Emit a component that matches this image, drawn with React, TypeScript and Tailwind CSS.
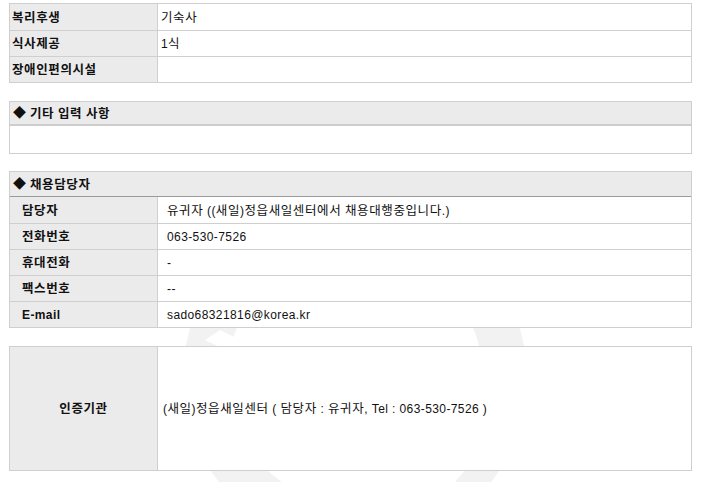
import React from 'react';

const font = { fontFamily: '"Liberation Sans", "Noto Sans CJK KR", sans-serif' };

// hangul in the original is a wide bitmap face; give hangul runs their own size
const T = ({ text }: { text: string }) => (
  <span>
    {text.split(/([\uac00-\ud7a3]+)/).map((part, i) =>
      /[\uac00-\ud7a3]/.test(part) ? (
        <span key={i} className="text-[12.5px] tracking-[0.6px]" style={{ fontFamily: '"Noto Sans CJK KR", sans-serif' }}>
          {part}
        </span>
      ) : (
        <span key={i} className="tracking-[0.4px]">{part}</span>
      )
    )}
  </span>
);

const benefits = [
  { label: '복리후생', value: '기숙사' },
  { label: '식사제공', value: '1식' },
  { label: '장애인편의시설', value: '' },
];

const contacts = [
  { label: '담당자', value: '유귀자 ((새일)정읍새일센터에서 채용대행중입니다.)' },
  { label: '전화번호', value: '063-530-7526' },
  { label: '휴대전화', value: '-' },
  { label: '팩스번호', value: '--' },
  { label: 'E-mail', value: 'sado68321816@korea.kr' },
];

const Watermark = () => (
  <svg className="absolute left-0 top-0 pointer-events-none" width="707" height="482" viewBox="0 0 707 482">
    <circle cx="355" cy="377" r="150" fill="none" stroke="#f2f2f2" strokeWidth="44" />
    <path d="M420 482 L470 420 L500 430 L455 482 Z" fill="#ffffff" />
    <path d="M220 330 L260 350 L250 362 L205 340 Z" fill="#ffffff" />
  </svg>
);

const App = () => {
  return (
    <div className="relative w-[707px] h-[482px] bg-white overflow-hidden text-[12px] text-[#111]" style={font}>
      <Watermark />
      <div className="relative pl-[9px] pt-[3px] w-[692px]">
        {/* 복리후생 */}
        <div className="border border-[#cfcfcf]">
          {benefits.map((row, i) => (
            <div key={row.label} className={`flex h-[26px] ${i > 0 ? 'border-t border-[#cfcfcf]' : ''}`}>
              <div className="w-[148px] bg-[#ebebeb] border-r border-[#cfcfcf] pl-[2px] flex items-center font-bold">
                <T text={row.label} />
              </div>
              <div className="flex-1 bg-white pl-[3px] flex items-center">
                <T text={row.value} />
              </div>
            </div>
          ))}
        </div>

        {/* 기타 입력 사항 */}
        <div className="mt-[18px] border border-[#cfcfcf]">
          <div className="h-[24px] bg-[#ebebeb] border-b-2 border-[#cdcdcd] flex items-center pl-[3px] font-bold">
            <span className="text-[13px] mr-[4px]">◆</span>
            <T text="기타 입력 사항" />
          </div>
          <div className="h-[27px] bg-white" />
        </div>

        {/* 채용담당자 */}
        <div className="mt-[17px] border border-[#cfcfcf]">
          <div className="h-[25px] bg-[#ebebeb] border-b border-[#9a9a9a] flex items-center pl-[3px] font-bold">
            <span className="text-[13px] mr-[4px]">◆</span>
            <T text="채용담당자" />
          </div>
          {contacts.map((row, i) => (
            <div key={row.label} className={`flex h-[26px] ${i > 0 ? 'border-t border-[#cfcfcf]' : ''}`}>
              <div className="w-[148px] bg-[#ebebeb] border-r border-[#cfcfcf] pl-[12px] flex items-center font-bold">
                <T text={row.label} />
              </div>
              <div className="flex-1 bg-white pl-[9px] flex items-center">
                <T text={row.value} />
              </div>
            </div>
          ))}
        </div>

        {/* 인증기관 */}
        <div className="mt-[18px] border border-[#cfcfcf] flex h-[125px]">
          <div className="w-[148px] bg-[#ebebeb] border-r border-[#cfcfcf] flex items-center justify-center font-bold">
            <T text="인증기관" />
          </div>
          <div className="flex-1 bg-white pl-[5px] flex items-center">
            <T text="(새일)정읍새일센터 ( 담당자 : 유귀자, Tel : 063-530-7526 )" />
          </div>
        </div>
      </div>
    </div>
  );
};

export default App;
